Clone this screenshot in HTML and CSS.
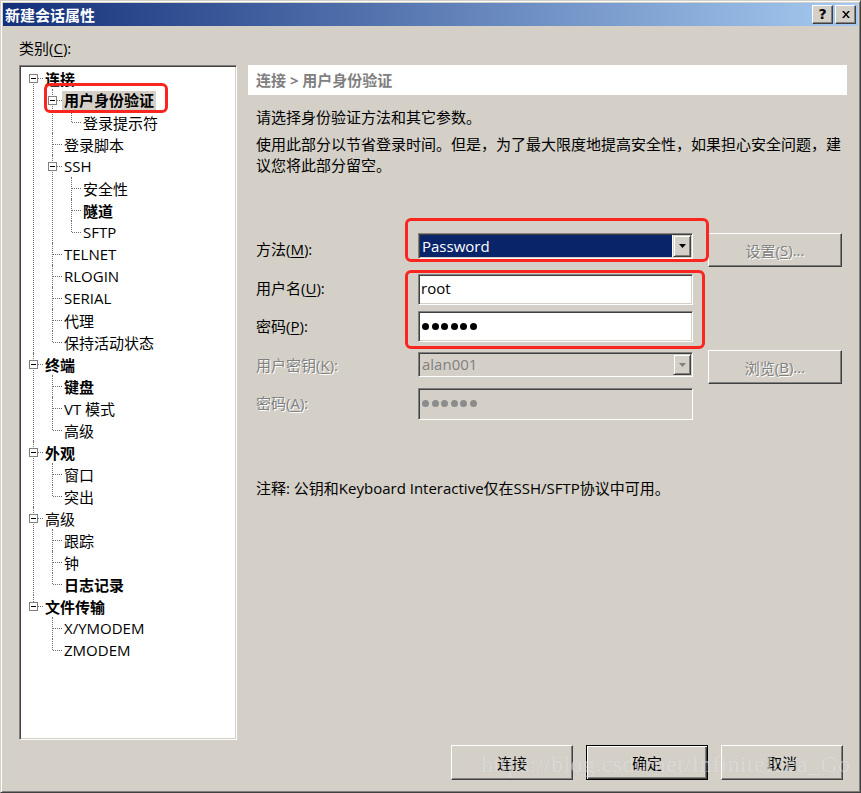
FILE: index.html
```html
<!DOCTYPE html>
<html lang="zh-CN">
<head>
<meta charset="utf-8">
<title>新建会话属性</title>
<link rel="stylesheet" href="styles.css">
</head>
<body>
<div class="window">
  <div class="titlebar">
    <span class="title">新建会话属性</span>
    <div class="tbtns">
      <span class="tbtn q">?</span>
      <span class="tbtn"><svg width="8" height="7" viewBox="0 0 8 7"><path d="M0 0h2l2 2.5L6 0h2L5 3.5 8 7H6L4 4.5 2 7H0l3-3.5z" fill="#000"/></svg></span>
    </div>
  </div>
  <div class="body">
    <div class="grid">
      <div class="cat-label">类别(<u>C</u>):</div>
      <div class="treebox">
        <ul class="tree">
          <li><span class="exp"></span><div class="row b">连接</div>
            <ul>
              <li><span class="exp"></span><div class="row"><span class="sel b">用户身份验证</span></div><span class="annot annot-tree"></span>
                <ul>
                  <li><div class="row">登录提示符</div></li>
                </ul>
              </li>
              <li><div class="row">登录脚本</div></li>
              <li><span class="exp"></span><div class="row">SSH</div>
                <ul>
                  <li><div class="row">安全性</div></li>
                  <li><div class="row b">隧道</div></li>
                  <li><div class="row">SFTP</div></li>
                </ul>
              </li>
              <li><div class="row">TELNET</div></li>
              <li><div class="row">RLOGIN</div></li>
              <li><div class="row">SERIAL</div></li>
              <li><div class="row">代理</div></li>
              <li><div class="row">保持活动状态</div></li>
            </ul>
          </li>
          <li><span class="exp"></span><div class="row b">终端</div>
            <ul>
              <li><div class="row b">键盘</div></li>
              <li><div class="row">VT 模式</div></li>
              <li><div class="row">高级</div></li>
            </ul>
          </li>
          <li><span class="exp"></span><div class="row b">外观</div>
            <ul>
              <li><div class="row">窗口</div></li>
              <li><div class="row">突出</div></li>
            </ul>
          </li>
          <li><span class="exp"></span><div class="row">高级</div>
            <ul>
              <li><div class="row">跟踪</div></li>
              <li><div class="row">钟</div></li>
              <li><div class="row b">日志记录</div></li>
            </ul>
          </li>
          <li><span class="exp"></span><div class="row b">文件传输</div>
            <ul>
              <li><div class="row">X/YMODEM</div></li>
              <li><div class="row">ZMODEM</div></li>
            </ul>
          </li>
        </ul>
      </div>
      <div class="panel">
        <div class="phead">连接 &gt; 用户身份验证</div>
        <p class="desc desc1">请选择身份验证方法和其它参数。</p>
        <p class="desc desc2">使用此部分以节省登录时间。但是，为了最大限度地提高安全性，如果担心安全问题，建<br>议您将此部分留空。</p>
        <div class="form">
          <div class="frow r1">
            <label class="flabel">方法(<u>M</u>):</label>
            <div class="field combo sunken">
              <span class="cval chosen">Password</span>
              <span class="dd"><svg width="7" height="4" viewBox="0 0 7 4"><path d="M0 0h7L3.5 4z" fill="#000"/></svg></span>
            </div>
            <span class="btn side dis">设置(<u>S</u>)...</span>
          </div>
          <div class="frow r2">
            <label class="flabel">用户名(<u>U</u>):</label>
            <div class="field input sunken"><span class="itext">root</span></div>
          </div>
          <div class="frow r3">
            <label class="flabel">密码(<u>P</u>):</label>
            <div class="field input sunken"><span class="dots"><i></i><i></i><i></i><i></i><i></i><i></i></span></div>
          </div>
          <div class="frow r4">
            <label class="flabel dis">用户密钥(<u>K</u>):</label>
            <div class="field combo sunken off">
              <span class="cval">alan001</span>
              <span class="dd"><svg width="7" height="4" viewBox="0 0 7 4"><path d="M0 0h7L3.5 4z" fill="#808080"/></svg></span>
            </div>
            <span class="btn side dis">浏览(<u>B</u>)...</span>
          </div>
          <div class="frow r5">
            <label class="flabel dis">密码(<u>A</u>):</label>
            <div class="field input sunken off"><span class="dots grey"><i></i><i></i><i></i><i></i><i></i><i></i></span></div>
          </div>
          <span class="annot a1"></span>
          <span class="annot a2"></span>
        </div>
        <p class="note">注释: 公钥和Keyboard Interactive仅在SSH/SFTP协议中可用。</p>
      </div>
    </div>
    <div class="actions">
      <span class="btn abtn">连接</span>
      <span class="btn abtn default">确定</span>
      <span class="btn abtn">取消</span>
    </div>
  </div>
  <div class="wm">https://blog.csdn.net/InfiniteIdea_Go</div>
</div>
</body>
</html>
```

FILE: styles.css
```css
* { box-sizing: border-box; }
html, body { margin: 0; padding: 0; }
body {
  width: 861px;
  height: 793px;
  overflow: hidden;
  background: #d4d0c8;
  font-family: "Open Sans", "Noto Sans CJK SC", sans-serif;
  font-size: 15px;
  color: #000;
}
u { text-decoration: underline; text-underline-offset: 2px; }

.window {
  position: relative;
  width: 861px;
  height: 793px;
  border: 1px solid;
  border-color: #d4d0c8 #404040 #404040 #d4d0c8;
  box-shadow: inset 1px 1px #fff, inset -1px -1px #808080;
  padding: 2px;
  display: flex;
  flex-direction: column;
}

/* title bar */
.titlebar {
  flex: none;
  height: 23px;
  display: flex;
  align-items: center;
  justify-content: space-between;
  padding: 0 2px;
  background: linear-gradient(to right, #14307a, #a6caf0);
}
.title {
  color: #fff;
  font-family: "Noto Sans CJK SC", sans-serif;
  font-weight: bold;
  font-size: 15px;
  line-height: 23px;
}
.tbtns { display: flex; gap: 2px; }
.tbtn {
  width: 21px;
  height: 19px;
  display: flex;
  align-items: center;
  justify-content: center;
  background: #d4d0c8;
  border: 1px solid;
  border-color: #fff #404040 #404040 #fff;
  box-shadow: inset -1px -1px #808080;
}
.tbtn.q { font: bold 14px "DejaVu Sans", sans-serif; line-height: 17px; }

/* body */
.body {
  flex: 1;
  display: flex;
  flex-direction: column;
  padding: 12px 11px 0 16px;
}
.grid {
  display: grid;
  grid-template-columns: 218px 599px;
  grid-template-rows: 20px 675px;
  column-gap: 11px;
  row-gap: 7px;
}
.cat-label { grid-column: 1; grid-row: 1; line-height: 20px; }

.sunken {
  border: 1px solid;
  border-color: #808080 #fff #fff #808080;
  box-shadow: inset 1px 1px #404040, inset -1px -1px #d4d0c8;
}

/* tree */
.treebox {
  grid-column: 1;
  grid-row: 2;
  background: #fff;
  border: 1px solid;
  border-color: #808080 #fff #fff #808080;
  box-shadow: inset 1px 1px #404040, inset -1px -1px #d4d0c8;
  padding: 1px;
}
.tree, .tree ul { list-style: none; margin: 0; padding: 0; }
.tree ul { margin-left: 19px; }
.tree li { position: relative; }
.tree li::before {
  content: "";
  position: absolute;
  left: 12px;
  top: 0;
  bottom: 0;
  border-left: 1px dotted #6f6f6f;
}
.tree > li:first-child::before { top: 11px; }
.tree li:last-child::before { bottom: auto; height: 11px; }
.tree li::after {
  content: "";
  position: absolute;
  left: 13px;
  top: 11px;
  width: 9px;
  border-top: 1px dotted #6f6f6f;
}
.row {
  height: 22px;
  display: flex;
  align-items: center;
  padding-left: 24px;
  white-space: nowrap;
}
.b { font-weight: bold; }
.exp {
  position: absolute;
  z-index: 1;
  left: 8px;
  top: 7px;
  width: 9px;
  height: 9px;
  background: #fff;
  border: 1px solid #808080;
}
.exp::after {
  content: "";
  position: absolute;
  left: 1px;
  top: 3px;
  width: 5px;
  height: 1px;
  background: #000;
}
.sel {
  display: inline-block;
  height: 19px;
  line-height: 19px;
  padding: 0 2px;
  margin-left: -2px;
  background: #d4d0c8;
}

.annot {
  position: absolute;
  z-index: 2;
  border: 3px solid #f8261e;
  border-radius: 6px;
  pointer-events: none;
}
.annot-tree { left: 4px; top: -6px; width: 124px; height: 30px; }

/* right panel */
.panel { grid-column: 2; grid-row: 2; }
.phead {
  height: 30px;
  line-height: 30px;
  background: #fff;
  padding-left: 8px;
  color: #808080;
  font-weight: bold;
}
.desc { margin: 0 0 0 8px; line-height: 21px; }
.desc1 { margin-top: 12px; }
.desc2 { margin-top: 6px; }

.form { position: relative; margin: 57px 0 0 8px; }
.frow { display: flex; align-items: flex-start; }
.r2 { margin-top: 7px; }
.r3 { margin-top: 6px; }
.r4 { margin-top: 8px; }
.r5 { margin-top: 4px; }
.flabel { flex: none; width: 162px; line-height: 20px; margin-top: 5px; }
.r1 .flabel { margin-top: 6px; }
.r2 .flabel { margin-top: 4px; }
.dis { color: #808080; text-shadow: 1px 1px 0 #fff; }

.field { flex: none; width: 275px; }
.combo {
  height: 26px;
  padding: 1px;
  display: flex;
  background: #fff;
}
.r4 .combo { height: 25px; margin-top: 2px; }
.cval { flex: 1; padding-left: 2px; line-height: 22px; }
.r4 .cval { line-height: 21px; color: #808080; }
.chosen { background: #0a246a; color: #fff; margin-right: 1px; }
.dd {
  width: 18px;
  display: flex;
  align-items: center;
  justify-content: center;
  background: #d4d0c8;
  border: 1px solid;
  border-color: #d4d0c8 #404040 #404040 #d4d0c8;
  box-shadow: inset 1px 1px #fff, inset -1px -1px #808080;
}
.off { background: #d4d0c8; }

.input {
  height: 31px;
  padding: 0 2px;
  display: flex;
  align-items: center;
  background: #fff;
}
.r5 .input { height: 32px; }
.r5 .input.off { background: #d4d0c8; }
.itext { line-height: 22px; margin-top: -3px; }
.dots { display: flex; gap: 2.5px; padding-left: 1px; margin-top: -1px; }
.dots i { display: block; width: 7px; height: 7px; border-radius: 50%; background: #000; }
.dots.grey i { background: #8c8c8c; }

.btn {
  display: flex;
  align-items: center;
  justify-content: center;
  background: #d4d0c8;
  border: 1px solid;
  border-color: #fff #404040 #404040 #fff;
  box-shadow: inset -1px -1px #808080;
  white-space: nowrap;
}
.side { width: 134px; height: 34px; margin-left: 15px; }

.a1 { left: 149px; top: -15px; width: 304px; height: 44px; }
.a2 { left: 149px; top: 37px; width: 300px; height: 79px; }

.note { margin: 58px 0 0 8px; line-height: 21px; }

/* bottom buttons */
.actions {
  display: flex;
  justify-content: flex-end;
  gap: 13px;
  margin: 5px 4px 0 0;
}
.abtn { width: 122px; height: 35px; }
.abtn.default {
  border: 1px solid #000;
  box-shadow: inset 1px 1px #fff, inset -1px -1px #404040, inset -2px -2px #808080;
}

.wm {
  position: absolute;
  left: 480px;
  top: 751px;
  font-family: "Liberation Serif", serif;
  font-size: 24px;
  line-height: 24px;
  letter-spacing: 0.4px;
  color: rgba(255, 255, 255, 0.4);
  text-shadow: 0 0 1px rgba(150, 150, 150, 0.3);
  white-space: nowrap;
  pointer-events: none;
}
```
